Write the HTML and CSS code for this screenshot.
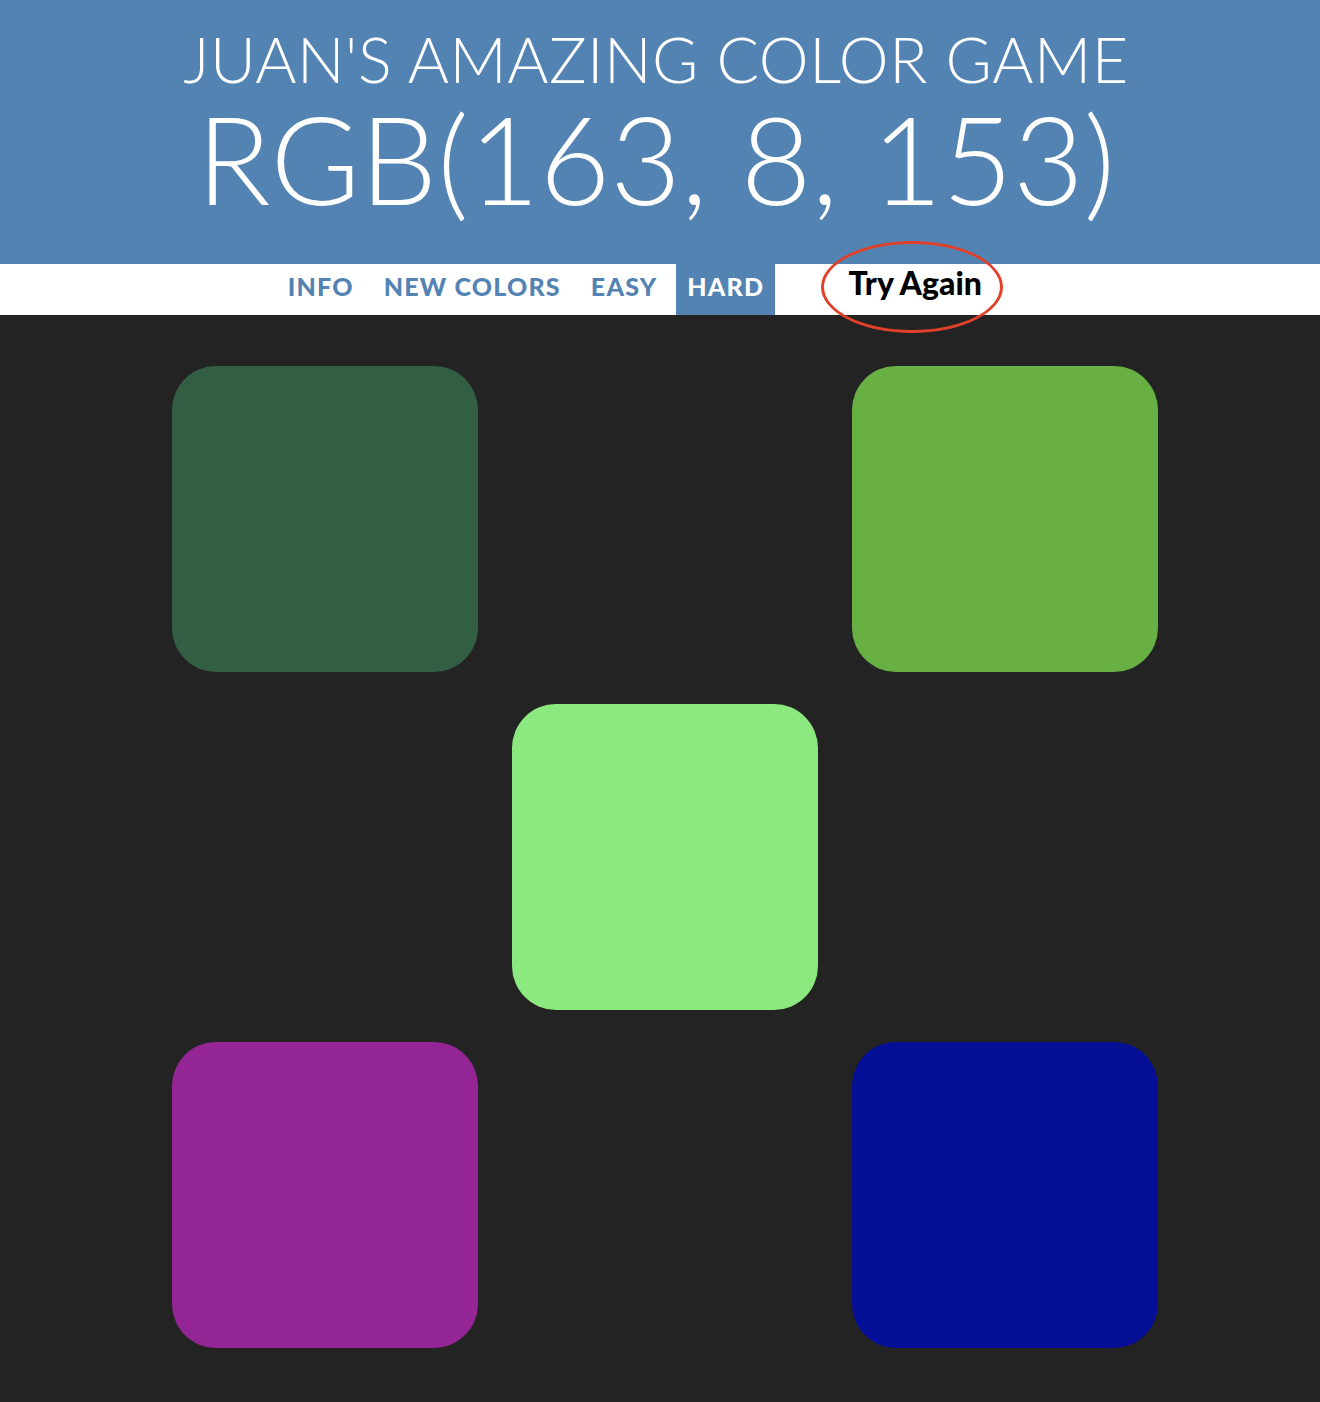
FILE: index.html
```html
<!DOCTYPE html>
<html lang="en">
<head>
<meta charset="utf-8">
<title>Color Game</title>
<link rel="stylesheet" href="styles.css">
</head>
<body>
<header class="header">
  <h1 class="title">
    <span class="title-line">JUAN'S AMAZING COLOR GAME</span>
    <span class="rgb-line">RGB(163, 8, 153)</span>
  </h1>
</header>
<nav class="stripe">
  <button class="nav-btn">Info</button>
  <button class="nav-btn">New Colors</button>
  <button class="nav-btn">Easy</button>
  <button class="nav-btn is-selected">Hard</button>
  <span class="message">Try Again<span class="annotation"></span></span>
</nav>
<main class="board">
  <div class="square sq-dark-green"></div>
  <div class="square is-hidden"></div>
  <div class="square sq-green"></div>
  <div class="square is-hidden"></div>
  <div class="square sq-light-green"></div>
  <div class="square is-hidden"></div>
  <div class="square sq-purple"></div>
  <div class="square is-hidden"></div>
  <div class="square sq-navy"></div>
</main>
</body>
</html>
```

FILE: styles.css
```css
html, body {
  margin: 0;
  padding: 0;
}

body {
  background: #232323;
  font-family: "Lato", "Open Sans", sans-serif;
  min-height: 1402px;
}

.header {
  background: #5383b2;
  height: 264px;
  color: #fff;
  text-align: center;
  overflow: hidden;
}

.title {
  margin: 0;
  font-weight: 300;
  display: flex;
  flex-direction: column;
  align-items: center;
  padding-right: 8px;
}

.title-line {
  font-size: 63px;
  line-height: 60px;
  padding-top: 29px;
  letter-spacing: 0.5px;
}

.rgb-line {
  font-size: 122px;
  line-height: 118px;
  margin-top: 10px;
  letter-spacing: 0;
}

.stripe {
  position: relative;
  background: #fff;
  height: 51px;
  text-align: center;
  font-size: 0;
}

.nav-btn {
  display: inline-block;
  vertical-align: top;
  box-sizing: border-box;
  height: 51px;
  margin: 0 4px;
  padding: 0 11px 7px;
  border: none;
  background: none;
  color: #5383b2;
  font-family: "Lato", sans-serif;
  font-weight: 900;
  font-size: 25px;
  letter-spacing: 1.2px;
  text-transform: uppercase;
  line-height: 44px;
}

.nav-btn.is-selected {
  background: #5383b2;
  color: #fff;
}

.message {
  position: relative;
  display: inline-block;
  vertical-align: top;
  width: 264px;
  margin-left: 4px;
  height: 51px;
  line-height: 38px;
  font-size: 32px;
  font-weight: 900;
  color: #000;
}

.annotation {
  position: absolute;
  left: 38px;
  top: -23px;
  width: 176px;
  height: 86px;
  border: 3.5px solid #e2402a;
  border-radius: 50%;
  z-index: 2;
}

.board {
  display: grid;
  grid-template-columns: repeat(3, 306px);
  grid-auto-rows: 306px;
  column-gap: 34px;
  row-gap: 32px;
  justify-content: center;
  padding: 51px 0 0 10px;
}

.square {
  border-radius: 44px;
}

.square.is-hidden {
  visibility: hidden;
}

.sq-dark-green { background: #325f43; }
.sq-green { background: #68af44; }
.sq-light-green { background: #8ce97f; }
.sq-purple { background: #942594; }
.sq-navy { background: #050f96; }
```
